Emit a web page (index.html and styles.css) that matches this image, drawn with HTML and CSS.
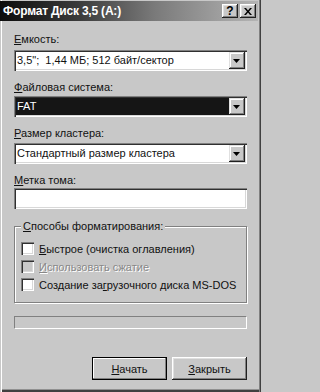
FILE: index.html
```html
<!DOCTYPE html>
<html lang="ru">
<head>
<meta charset="utf-8">
<title>Формат Диск 3,5 (А:)</title>
<link rel="stylesheet" href="styles.css">
</head>
<body>
<div class="window">
  <div class="titlebar">
    <span class="title">Формат Диск 3,5 (А:)</span>
    <div class="tbtns">
      <span class="tbtn help">?</span>
      <span class="tbtn close"><svg width="8" height="7" viewBox="0 0 8 7"><path d="M0 0h2l2 2.5L6 0h2L5 3.5 8 7H6L4 4.5 2 7H0l3-3.5z" fill="#000"/></svg></span>
    </div>
  </div>
  <div class="content">
    <div class="label l1"><u>Е</u>мкость:</div>
    <div class="combo c1">
      <div class="field">3,5";&nbsp; 1,44 МБ; 512 байт/сектор</div>
      <div class="ddbtn"><svg width="7" height="4" viewBox="0 0 7 4"><path d="M0 0h7L3.5 4z" fill="#000"/></svg></div>
    </div>
    <div class="label l2"><u>Ф</u>айловая система:</div>
    <div class="combo c2">
      <div class="field selected">FAT</div>
      <div class="ddbtn"><svg width="7" height="4" viewBox="0 0 7 4"><path d="M0 0h7L3.5 4z" fill="#000"/></svg></div>
    </div>
    <div class="label l3"><u>Р</u>азмер кластера:</div>
    <div class="combo c3">
      <div class="field">Стандартный размер кластера</div>
      <div class="ddbtn"><svg width="7" height="4" viewBox="0 0 7 4"><path d="M0 0h7L3.5 4z" fill="#000"/></svg></div>
    </div>
    <div class="label l4"><u>М</u>етка тома:</div>
    <div class="textbox"></div>
    <div class="group">
      <span class="legend"><u>С</u>пособы форматирования:</span>
      <div class="chkrow"><span class="chk"></span><span class="chklabel"><u>Б</u>ыстрое (очистка оглавления)</span></div>
      <div class="chkrow disabled"><span class="chk"></span><span class="chklabel"><u>И</u>спользовать сжатие</span></div>
      <div class="chkrow"><span class="chk"></span><span class="chklabel">Создание за<u>г</u>рузочного диска MS-DOS</span></div>
    </div>
    <div class="progress"></div>
    <div class="buttons">
      <button class="btn default"><u>Н</u>ачать</button>
      <button class="btn"><u>З</u>акрыть</button>
    </div>
  </div>
</div>
</body>
</html>
```
FILE: styles.css
```css
html, body {
  margin: 0;
  padding: 0;
  background: #c8c8c8;
}
body {
  width: 261px;
  height: 392px;
  overflow: hidden;
  font-family: "Liberation Sans", Arial, sans-serif;
  font-size: 11px;
  color: #111;
}
u { text-decoration: underline; text-underline-offset: 1px; }
.window {
  width: 261px;
  height: 392px;
  box-sizing: border-box;
  background: #c8c8c8;
  box-shadow: inset 1px 0 #c8c8c8, inset 2px 0 #fff,
              inset -1px 0 #404040, inset -2px 0 #808080,
              inset 0 -1px #404040, inset 0 -2px #404040, inset 0 -3px #909090;
  overflow: hidden;
}
.titlebar {
  margin: 1px 3px 0 0;
  height: 20px;
  background: linear-gradient(to right, #0c0c0c 0%, #3a3a3a 30%, #7a7a7a 60%, #b4b4b4 100%);
  display: flex;
  align-items: center;
  justify-content: space-between;
}
.title {
  color: #fff;
  font-weight: bold;
  font-size: 12px;
  padding-left: 3px;
  letter-spacing: -0.2px;
}
.tbtns {
  display: flex;
  gap: 2px;
  padding-right: 2px;
}
.tbtn {
  width: 16px;
  height: 14px;
  box-sizing: border-box;
  background: #c8c8c8;
  box-shadow: inset -1px -1px #202020, inset 1px 1px #fff, inset -2px -2px #808080, inset 2px 2px #e0e0e0;
  display: flex;
  align-items: center;
  justify-content: center;
  font-weight: bold;
  font-size: 12px;
  color: #000;
  line-height: 14px;
}
.content {
  padding: 0 14px;
}
.label {
  line-height: 13px;
  height: 13px;
  white-space: nowrap;
}
.l1 { margin-top: 12px; }
.l2, .l3, .l4 { margin-top: 10px; }
.combo {
  height: 21px;
  box-sizing: border-box;
  padding: 2px;
  background: #fff;
  display: flex;
  box-shadow: inset 1px 1px #808080, inset 2px 2px #303030, inset -1px -1px #fff, inset -2px -2px #d8d8d8;
}
.c1 { margin-top: 4px; }
.c2 { margin-top: 2px; }
.c3 { margin-top: 3px; }
.field {
  flex: 1;
  line-height: 17px;
  padding-left: 1px;
  white-space: nowrap;
  overflow: hidden;
}
.field.selected {
  background: #151515;
  color: #fff;
  padding-left: 1px;
}
.ddbtn {
  width: 16px;
  height: 17px;
  box-sizing: border-box;
  background: #c8c8c8;
  box-shadow: inset -1px -1px #202020, inset 1px 1px #e0e0e0, inset -2px -2px #808080, inset 2px 2px #fff;
  display: flex;
  align-items: center;
  justify-content: center;
}
.ddbtn svg { margin-left: -1px; margin-top: 1px; }
.textbox {
  margin-top: 1px;
  height: 21px;
  background: #fff;
  box-shadow: inset 1px 1px #808080, inset 2px 2px #303030, inset -1px -1px #fff, inset -2px -2px #d8d8d8;
}
.group {
  position: relative;
  margin-top: 17px;
  height: 77px;
  box-sizing: border-box;
  border: 1px solid #808080;
  box-shadow: 1px 1px 0 #fff, inset 1px 1px 0 #fff;
  padding: 15px 0 0 6px;
}
.legend {
  position: absolute;
  top: -7px;
  left: 6px;
  padding: 0 2px;
  background: #c8c8c8;
  line-height: 13px;
  white-space: nowrap;
}
.chkrow {
  display: flex;
  align-items: center;
  height: 13px;
  margin-bottom: 5px;
  white-space: nowrap;
}
.chk {
  width: 13px;
  height: 13px;
  flex: none;
  margin-right: 5px;
  background: #fff;
  box-shadow: inset 1px 1px #808080, inset 2px 2px #303030, inset -1px -1px #fff, inset -2px -2px #d8d8d8;
}
.disabled .chk { background: #c8c8c8; }
.disabled .chklabel {
  color: #888;
  text-shadow: 1px 1px 0 #fff;
}
.progress {
  margin-top: 13px;
  height: 13px;
  box-sizing: border-box;
  border: 1px solid;
  border-color: #808080 #fff #fff #808080;
}
.buttons {
  margin-top: 28px;
  display: flex;
  justify-content: flex-end;
  gap: 5px;
}
.btn {
  width: 75px;
  height: 23px;
  box-sizing: border-box;
  border: 0;
  padding: 0;
  margin: 0;
  font: inherit;
  color: #111;
  background: #c8c8c8;
  box-shadow: inset -1px -1px #202020, inset 1px 1px #fff, inset -2px -2px #808080, inset 2px 2px #e0e0e0;
}
.btn.default {
  border: 1px solid #000;
  box-shadow: inset -1px -1px #808080, inset 1px 1px #fff;
}
```
